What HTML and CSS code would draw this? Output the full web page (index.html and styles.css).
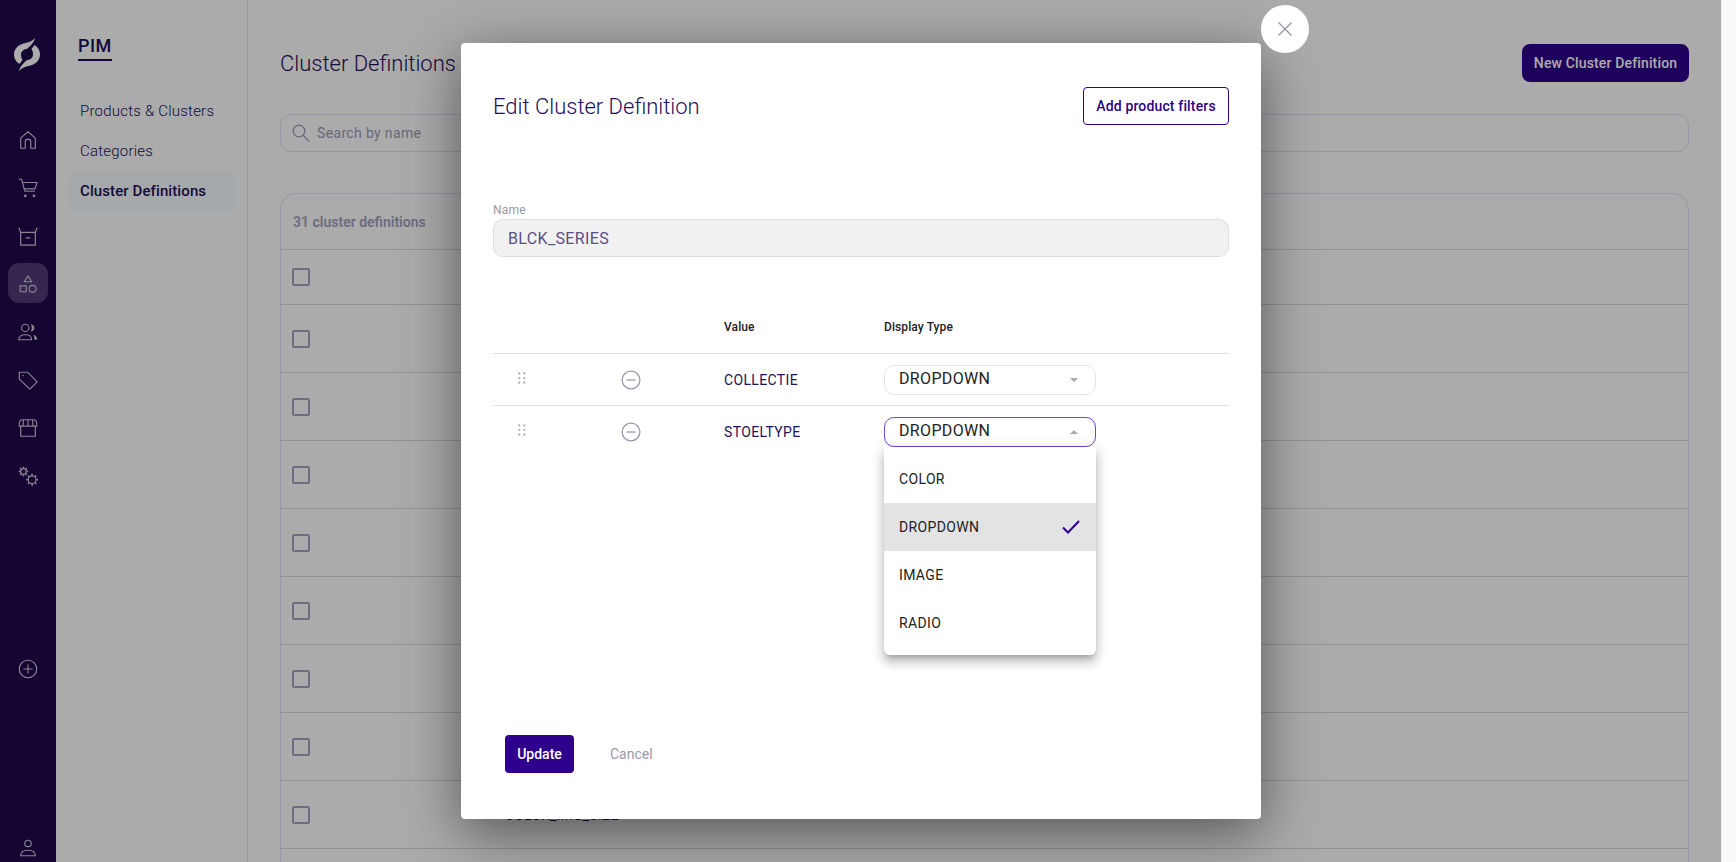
FILE: index.html
```html
<!DOCTYPE html>
<html lang="en">
<head>
<meta charset="utf-8">
<title>Cluster Definitions</title>
<link rel="stylesheet" href="styles.css">
</head>
<body>
<div class="app">
  <nav class="rail">
    <svg class="logo" viewBox="0 0 26 33"><path d="M21 0C18 3.500 14 4.500 9.500 5.500 3.500 7 0 11.500 0 16.500 0 20.500 2 24 5.500 26L8.500 22C7.500 20.500 7 18.500 7 16.500 7 13.500 9.500 11 13 11 15.500 8.500 20 5 21 0Z"/><path d="M21 0C18 3.500 14 4.500 9.500 5.500 3.500 7 0 11.500 0 16.500 0 20.500 2 24 5.500 26L8.500 22C7.500 20.500 7 18.500 7 16.500 7 13.500 9.500 11 13 11 15.500 8.500 20 5 21 0Z" transform="rotate(180 13 16.500)"/></svg>
    <ul class="rail-list">
      <li class="rail-item"><svg class="ico" viewBox="0 0 24 24"><path d="M4 21V10l8-7 8 7v11h-5v-7a3 3 0 0 0-6 0v7Z"/></svg></li>
      <li class="rail-item"><svg class="ico" viewBox="0 0 24 24"><path d="M2 2.500h3l3.500 13h11M6 6h16l-2.500 7H8"/><circle class="fill" cx="9" cy="20.500" r="1.500"/><circle class="fill" cx="18.500" cy="20.500" r="1.500"/></svg></li>
      <li class="rail-item"><svg class="ico" viewBox="0 0 24 24"><path d="M4 8h16v14H4ZM4 8 2 3M20 8l2-5M9.500 14h5"/></svg></li>
      <li class="rail-item rail-active"><svg class="ico" viewBox="0 0 24 24"><path d="M12 3l4 6.500H8ZM3.500 14h6.500v6.500H3.500Z"/><circle cx="17" cy="17.300" r="3.800"/></svg></li>
      <li class="rail-item"><svg class="ico" viewBox="0 0 24 24"><circle cx="9" cy="7.500" r="4"/><path d="M2 20.500c0-4 3-5.500 7-5.500s7 1.500 7 5.500Z"/><path class="fill" d="M15 3.500c3 .5 4 2.500 4 4s-1 3.500-4 4c1.500-2.500 1.500-5.500 0-8ZM18 15c2 .5 4 2 4 5.500h-3c0-2-.2-3.500-1-5.500Z"/></svg></li>
      <li class="rail-item"><svg class="ico" viewBox="0 0 24 24"><path d="M2.500 3.500h9L22 14l-8 8L2.500 11Z"/><circle class="fill" cx="6.500" cy="7" r=".8"/></svg></li>
      <li class="rail-item"><svg class="ico" viewBox="0 0 24 24"><path d="M4 10v11h16V10M2.500 8c0-3 1-5 3-5h13c2 0 3 2 3 5v2h-19ZM7 3.500 6.500 10M12 3.500V10M17 3.500l.5 6.500"/></svg></li>
      <li class="rail-item"><svg class="ico" viewBox="0 0 24 24"><circle cx="7" cy="7" r="3"/><path class="thick" d="M7 1.800v1.500M7 10.700v1.500M1.800 7h1.500M10.700 7h1.500M3.300 3.300l1.100 1.100M9.600 9.600l1.100 1.100M3.300 10.700l1.100-1.100M9.600 4.400l1.100-1.100"/><circle cx="16.500" cy="16" r="4.200"/><path class="thick" d="M16.500 9.500v2M16.500 20.500v2M10 16h2M21 16h2M12 11.500l1.300 1.300M19.700 19.200l1.300 1.300M12 20.500l1.300-1.300M19.700 12.800l1.300-1.300"/></svg></li>
    </ul>
    <div class="rail-bottom">
      <div class="rail-item"><svg class="ico" viewBox="0 0 24 24"><circle cx="12" cy="12" r="9.500"/><path d="M12 7v10M7 12h10"/></svg></div>
      <svg class="ico ico-user" viewBox="0 0 24 24"><circle cx="12" cy="7" r="3.500"/><path d="M4 20.500c0-4.500 4-6 8-6s8 1.500 8 6Z"/></svg>
    </div>
  </nav>

  <aside class="subnav">
    <h2 class="subnav-title"><span>PIM</span></h2>
    <a class="subnav-link">Products &amp; Clusters</a>
    <a class="subnav-link">Categories</a>
    <a class="subnav-link subnav-active">Cluster Definitions</a>
  </aside>

  <main class="main">
    <header class="main-head">
      <h1 class="main-title">Cluster Definitions</h1>
      <button class="btn-new">New Cluster Definition</button>
    </header>
    <div class="search">
      <svg class="search-ico" viewBox="0 0 18 18"><circle cx="7" cy="7" r="5.800"/><path d="m11.200 11.200 6 6"/></svg>
      <span>Search by name</span>
    </div>
    <section class="card">
      <div class="card-head">31 cluster definitions</div>
      <div class="row row-first"><span class="check"></span></div>
      <div class="row"><span class="check"></span></div>
      <div class="row"><span class="check"></span></div>
      <div class="row"><span class="check"></span></div>
      <div class="row"><span class="check"></span></div>
      <div class="row"><span class="check"></span></div>
      <div class="row"><span class="check"></span></div>
      <div class="row"><span class="check"></span></div>
      <div class="row"><span class="check"></span><span class="row-name">COLOR_IMG_SIZE</span></div>
      <div class="row"><span class="check"></span></div>
    </section>
  </main>
  <div class="overlay"></div>
  <div class="scroll-strip"></div>

  <div class="modal">
    <button class="modal-close"><svg viewBox="0 0 16 16"><path d="m1.500 1.500 13 13M14.500 1.500l-13 13"/></svg></button>
    <div class="modal-head">
      <h2 class="modal-title">Edit Cluster Definition</h2>
      <button class="btn-outline">Add product filters</button>
    </div>
    <label class="field-label">Name</label>
    <div class="field-input">BLCK_SERIES</div>

    <div class="table">
      <div class="t-row t-head">
        <span></span><span></span>
        <span>Value</span><span>Display Type</span>
      </div>
      <div class="t-row">
        <svg class="drag" viewBox="0 0 8 12"><circle cx="1.300" cy="1.300" r="1.100"/><circle cx="6.300" cy="1.300" r="1.100"/><circle cx="1.300" cy="6" r="1.100"/><circle cx="6.300" cy="6" r="1.100"/><circle cx="1.300" cy="10.700" r="1.100"/><circle cx="6.300" cy="10.700" r="1.100"/></svg>
        <svg class="minus" viewBox="0 0 20 20"><circle cx="10" cy="10" r="8.900"/><path d="M5.500 10h9"/></svg>
        <span class="t-value">COLLECTIE</span>
        <div class="select"><span>DROPDOWN</span><i class="caret"></i></div>
      </div>
      <div class="t-row">
        <svg class="drag" viewBox="0 0 8 12"><circle cx="1.300" cy="1.300" r="1.100"/><circle cx="6.300" cy="1.300" r="1.100"/><circle cx="1.300" cy="6" r="1.100"/><circle cx="6.300" cy="6" r="1.100"/><circle cx="1.300" cy="10.700" r="1.100"/><circle cx="6.300" cy="10.700" r="1.100"/></svg>
        <svg class="minus" viewBox="0 0 20 20"><circle cx="10" cy="10" r="8.900"/><path d="M5.500 10h9"/></svg>
        <span class="t-value">STOELTYPE</span>
        <div class="select select-open"><span>DROPDOWN</span><i class="caret caret-up"></i>
          <ul class="menu">
            <li class="menu-item">COLOR</li>
            <li class="menu-item menu-selected">DROPDOWN<svg class="tick" viewBox="0 0 18 14"><path d="M1 7.500 6 12.500 17 1"/></svg></li>
            <li class="menu-item">IMAGE</li>
            <li class="menu-item">RADIO</li>
          </ul>
        </div>
      </div>
    </div>

    <div class="modal-foot">
      <button class="btn-primary">Update</button>
      <button class="btn-text">Cancel</button>
    </div>
  </div>
</div>
</body>
</html>
```
FILE: styles.css
```css
* { box-sizing: border-box; }
html, body { margin: 0; height: 100%; }
body { font-family: Roboto, "Liberation Sans", sans-serif; overflow: hidden; background: #fff; }
h1, h2, ul { margin: 0; padding: 0; list-style: none; }
button { font-family: inherit; cursor: pointer; }

.app { display: flex; width: 1736px; height: 862px; overflow: hidden; position: relative; }

/* rail */
.rail { width: 56px; flex: none; background: #1e084c; display: flex; flex-direction: column; align-items: center; padding: 38px 0 3px; }
.logo { width: 26px; height: 33px; fill: #fff; margin-left: -2px; flex: none; }
.rail-list { margin-top: 48px; display: flex; flex-direction: column; gap: 8px; }
.rail-item { width: 40px; height: 40px; border-radius: 11px; display: flex; align-items: center; justify-content: center; }
.rail-active { background: #4f3b78; }
.ico { width: 22px; height: 22px; margin-top: 1px; fill: none; stroke: #cfc9da; stroke-width: 1.250; stroke-linejoin: round; }
.ico .fill { fill: #cfc9da; stroke: none; }
.ico .thick { stroke-width: 1.800; }
.rail-bottom { margin-top: auto; display: flex; flex-direction: column; align-items: center; gap: 148px; }
.ico-user { flex: none; }

/* secondary nav */
.subnav { width: 192px; flex: none; border-right: 1px solid #e4e4ea; padding: 35px 12px 0; display: flex; flex-direction: column; }
.subnav-title { font-size: 18px; line-height: 21px; font-weight: 500; color: #1f0e55; letter-spacing: .5px; margin: 0 0 30px 10px; }
.subnav-title span { display: inline-block; padding-bottom: 3px; border-bottom: 2px solid #1f0e55; }
.subnav-link { height: 40px; padding: 0 12px; border-radius: 10px; display: flex; align-items: center; font-size: 15px; font-weight: 300; color: #22105a; letter-spacing: .22px; }
.subnav-active { background: #f6fcff; font-weight: 500; letter-spacing: .1px; color: #1f0e55; }

/* main */
.main { width: 1473px; flex: none; padding: 44px 32px 0; }
.main-head { display: flex; justify-content: space-between; align-items: center; height: 38px; margin-bottom: 32px; }
.main-title { font-size: 22px; font-weight: 300; color: #1f0e5c; }
.btn-new { height: 38px; width: 167px; border: 0; border-radius: 8px; background: #2e008b; color: #fff; font-size: 14px; font-weight: 500; letter-spacing: .15px; padding: 0; }
.search { height: 38px; border: 1px solid #e2e1f6; border-radius: 11px; display: flex; align-items: center; padding-left: 11px; gap: 7px; color: #9e9bb3; font-size: 14px; letter-spacing: .35px; margin-bottom: 41px; }
.search-ico { width: 18px; height: 18px; fill: none; stroke: #9e9bb3; stroke-width: 1.300; flex: none; }
.card { border: 1px solid #e2e1f6; border-radius: 16px 16px 0 0; }
.card-head { height: 55px; padding-left: 12px; display: flex; align-items: center; font-size: 14px; font-weight: 600; color: #a4a0ba; }
.row { height: 68px; border-top: 1px solid #dadada; display: flex; align-items: center; padding-left: 11px; }
.row-first { height: 55px; }
.check { width: 18px; height: 18px; border: 2px solid #a6a1bf; border-radius: 2px; flex: none; }
.row-name { margin-left: 195px; font-size: 14px; color: #27135f; letter-spacing: .2px; }

/* overlay */
.overlay { position: absolute; left: 0; top: 0; width: 1721px; height: 100%; background: rgba(0, 0, 0, .33); }
.scroll-strip { width: 15px; flex: none; background: #f9f9f9; border-left: 1px solid #eee; }

/* modal */
.modal { position: absolute; left: 461px; top: 43px; width: 800px; height: 776px; background: #fff; border-radius: 4px; padding: 44px 32px 46px; display: flex; flex-direction: column; box-shadow: 0 14px 56px rgba(0,0,0,.5); }
.modal-close { position: absolute; left: 800px; top: -38px; width: 48px; height: 48px; border: 0; border-radius: 50%; background: #fff; padding: 0; display: flex; align-items: center; justify-content: center; }
.modal-close svg { width: 16px; height: 16px; fill: none; stroke: #8f8ca3; stroke-width: 1.100; }
.modal-head { display: flex; justify-content: space-between; align-items: center; height: 38px; margin-bottom: 78px; }
.modal-title { font-size: 22px; font-weight: 300; color: #1f0e5c; }
.btn-outline { height: 38px; width: 146px; border: 1px solid #2e008b; border-radius: 4px; background: #fff; color: #2e008b; font-size: 14px; font-weight: 500; letter-spacing: .15px; padding: 0; }
.field-label { font-size: 12px; line-height: 14px; color: #9a98ab; letter-spacing: .2px; margin-bottom: 2px; }
.field-input { height: 38px; background: #f1f1f1; border: 1px solid #dedede; border-radius: 10px; padding-left: 14px; display: flex; align-items: center; font-size: 16px; color: #5b4d85; letter-spacing: .35px; }

.table { margin-top: 43px; }
.t-row { display: grid; grid-template-columns: 128px 103px 160px 1fr; align-items: center; height: 52px; border-top: 1px solid #e0e0e0; }
.t-head { height: 53px; border-top: 0; font-size: 12px; font-weight: 500; color: #222; letter-spacing: .1px; }
.drag { width: 8px; height: 12px; margin: -3px 0 0 25px; fill: #a8a5bb; }
.minus { width: 20px; height: 20px; fill: none; stroke: #9a98ae; stroke-width: 1.300; }
.t-value { font-size: 14px; color: #24125a; letter-spacing: .35px; }
.select { position: relative; width: 212px; height: 30px; border: 1px solid #e4e0f6; border-radius: 10px; display: flex; align-items: center; justify-content: space-between; padding: 0 17px 0 14px; font-size: 16px; color: #222; letter-spacing: .35px; }
.select span { margin-top: -2px; }
.select-open { border-color: #6a45e8; }
.caret { width: 0; height: 0; border-left: 4px solid transparent; border-right: 4px solid transparent; border-top: 4px solid #a9a9b5; }
.caret-up { border-top: 0; border-bottom: 4px solid #a9a9b5; }

.menu { position: absolute; left: -1px; top: 29px; width: 212px; padding: 8px 0; background: #fff; border-radius: 0 0 6px 6px; box-shadow: 0 5px 5px -3px rgba(0,0,0,.2), 0 8px 10px 1px rgba(0,0,0,.14), 0 3px 14px 2px rgba(0,0,0,.12); z-index: 2; }
.menu-item { height: 48px; display: flex; align-items: center; justify-content: space-between; padding: 0 16px 0 15px; font-size: 14px; color: #222; letter-spacing: .35px; }
.menu-selected { background: #e3e3e3; }
.tick { width: 18px; height: 14px; fill: none; stroke: #2e008b; stroke-width: 2; }

.modal-foot { margin-top: auto; display: flex; align-items: center; padding-left: 12px; gap: 36px; }
.btn-primary { height: 38px; width: 69px; border: 0; border-radius: 4px; background: #2e008b; color: #fff; font-size: 14px; font-weight: 500; padding: 0; }
.btn-text { border: 0; background: none; padding: 0; color: #9a98ab; font-size: 14px; font-weight: 400; }
```
